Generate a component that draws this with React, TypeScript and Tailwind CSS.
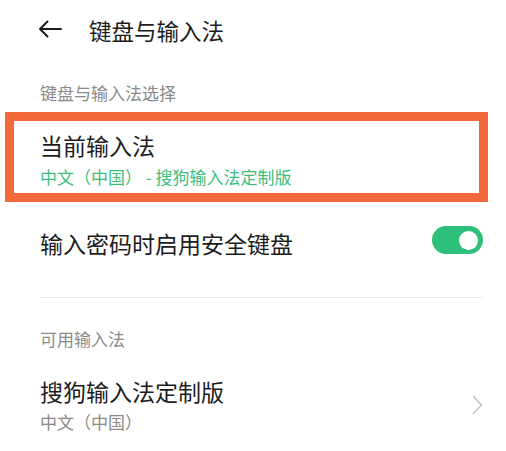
import React from 'react';

const font = { fontFamily: '"Noto Sans CJK SC", "Noto Sans", sans-serif' };

const Toggle: React.FC<{ on?: boolean }> = ({ on = true }) => (
  <div
    className={`relative flex h-[28px] w-[51px] items-center rounded-full px-[5px] mb-[6px] ${
      on ? 'justify-end bg-[#2dc07a]' : 'justify-start bg-gray-300'
    }`}
  >
    <div className="h-[19px] w-[19px] rounded-full bg-white" />
  </div>
);

export default function App() {
  return (
    <div className="min-h-[451px] w-[506px] bg-white text-[#1c1c1c]" style={font}>
      {/* header */}
      <div className="flex h-[60px] items-center pl-[38px]">
        <svg width="24" height="18" viewBox="0 0 24 18" fill="none" className="mb-[2px]">
          <path d="M23 9H2M9.5 1.5L2 9l7.5 7.5" stroke="#1c1c1c" strokeWidth="2" strokeLinecap="round" strokeLinejoin="round" />
        </svg>
        <span className="ml-[27px] text-[22.5px] leading-[30px]">键盘与输入法</span>
      </div>

      <div className="h-[52px] pl-[40px] pt-[22px] text-[17px] leading-[22px] text-[#8a8a8a]">键盘与输入法选择</div>

      {/* current IME, outlined */}
      <div className="mx-[5px] box-border h-[90px] w-[483px] border-[9px] border-[#f4693a] pl-[26px] pt-[9px]">
        <div className="text-[23px] leading-[30px]">当前输入法</div>
        <div className="mt-[7px] text-[17px] leading-[20px] text-[#3dbd7d]">中文（中国） - 搜狗输入法定制版</div>
      </div>

      <div className="flex h-[82px] items-center justify-between pl-[40px] pr-[23px]">
        <span className="text-[23px] leading-[30px]">输入密码时启用安全键盘</span>
        <Toggle />
      </div>

      <div className="ml-[40px] mr-[23px] mt-[13px] h-px bg-[#ebebeb]" />

      <div className="mt-[30px] pl-[40px] text-[17px] leading-[22px] text-[#8a8a8a]">可用输入法</div>

      <div className="mt-[26px] flex items-center justify-between pl-[40px] pr-[23px]">
        <div>
          <div className="text-[23px] leading-[30px]">搜狗输入法定制版</div>
          <div className="mt-[6px] text-[17px] leading-[20px] text-[#8a8a8a]">中文（中国）</div>
        </div>
        <svg width="11" height="20" viewBox="0 0 11 20" fill="none" className="mt-[1px]">
          <path d="M1.5 1.5L9.5 10l-8 8.5" stroke="#c4c4c4" strokeWidth="1.6" strokeLinecap="round" strokeLinejoin="round" />
        </svg>
      </div>
    </div>
  );
}
